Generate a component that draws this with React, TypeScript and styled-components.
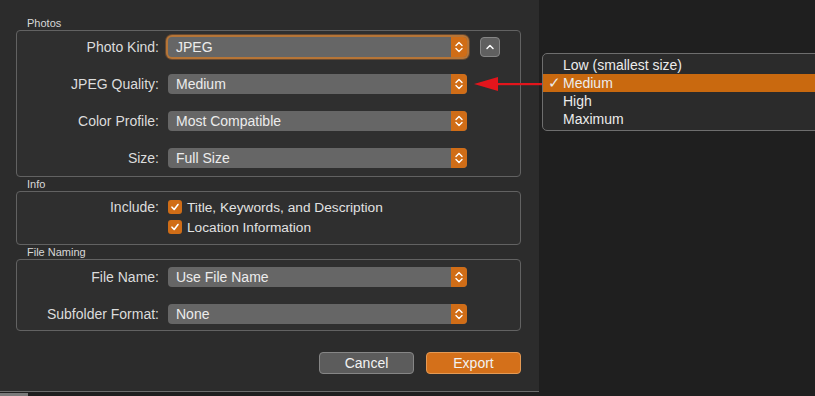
import styled, { createGlobalStyle } from "styled-components";

const GlobalStyle = createGlobalStyle`
  html, body {
    margin: 0;
    padding: 0;
    background: #1f1f1f;
    font-family: "Liberation Sans", Arial, sans-serif;
    -webkit-font-smoothing: antialiased;
  }
`;

const ORANGE = "#d06d17";

const Screen = styled.div`
  position: relative;
  width: 815px;
  height: 396px;
  display: flex;
  overflow: hidden;
  background: #1f1f1f;
`;

const Dialog = styled.div`
  width: 539px;
  height: 392px;
  box-sizing: border-box;
  background: #2c2c2c;
  border-bottom: 1px solid #6c6c6c;
  padding: 16px 19px 0 16px;
  display: flex;
  flex-direction: column;
`;

const BottomStrip = styled.div`
  position: absolute;
  left: 0;
  bottom: 0;
  width: 28px;
  height: 3px;
  background: #7a7a7a;
`;

const GroupTitle = styled.div`
  font-size: 11px;
  line-height: 14px;
  height: 14px;
  color: #d8d8d8;
  padding-left: 11px;
`;

const GroupBox = styled.div<{ $pt: number; $pb: number; $gap: number }>`
  box-sizing: border-box;
  width: 505px;
  border: 1px solid #626262;
  border-radius: 4px;
  background: #2f2f2f;
  padding: ${(p) => p.$pt}px 0 ${(p) => p.$pb}px 0;
  display: flex;
  flex-direction: column;
  gap: ${(p) => p.$gap}px;
`;

const Row = styled.div<{ $h: number }>`
  display: flex;
  align-items: center;
  height: ${(p) => p.$h}px;
`;

const Label = styled.div`
  width: 142px;
  margin-right: 9px;
  text-align: right;
  font-size: 14px;
  color: #dcdcdc;
`;

const Popup = styled.div<{ $focus?: boolean }>`
  position: relative;
  box-sizing: border-box;
  width: 299px;
  height: 20px;
  border-radius: 4px;
  background: #666666;
  display: flex;
  align-items: center;
  padding-left: 8px;
  font-size: 14px;
  color: #ececec;
  box-shadow: ${(p) =>
    p.$focus ? "0 0 0 2px rgba(196, 124, 56, 0.85), 0 0 0 3px rgba(160, 100, 50, 0.5)" : "none"};
`;

const Stepper = styled.div`
  position: absolute;
  right: 0;
  top: 0;
  width: 16px;
  height: 20px;
  background: ${ORANGE};
  border-radius: 0 4px 4px 0;
  display: flex;
  align-items: center;
  justify-content: center;
`;

const SmallButton = styled.div`
  box-sizing: border-box;
  width: 20px;
  height: 20px;
  margin-left: 13px;
  border: 1px solid #868686;
  border-radius: 4px;
  background: #606060;
  display: flex;
  align-items: center;
  justify-content: center;
`;

const CheckRow = styled.div`
  display: flex;
  align-items: center;
  gap: 5px;
  font-size: 13.7px;
  color: #e2e2e2;
`;

const CheckOffset = styled(CheckRow)`
  margin-left: 151px;
`;

const Checkbox = styled.div`
  box-sizing: border-box;
  width: 14px;
  height: 14px;
  border-radius: 3px;
  background: ${ORANGE};
  display: flex;
  align-items: center;
  justify-content: center;
`;

const ButtonBar = styled.div`
  width: 505px;
  margin-top: 21px;
  display: flex;
  justify-content: flex-end;
  gap: 12px;
`;

const Button = styled.div<{ $primary?: boolean }>`
  box-sizing: border-box;
  width: 95px;
  height: 22px;
  border-radius: 4px;
  border: 1px solid ${(p) => (p.$primary ? "#e49a55" : "#868686")};
  background: ${(p) => (p.$primary ? "#d4701a" : "#5c5c5c")};
  color: #f2f2f2;
  font-size: 14px;
  display: flex;
  align-items: center;
  justify-content: center;
`;

const Menu = styled.div`
  position: absolute;
  left: 542px;
  top: 53px;
  width: 290px;
  box-sizing: border-box;
  border: 1px solid #6e6e6e;
  border-radius: 5px;
  background: #2b2b2b;
  padding: 2px 0 2px 0;
  display: flex;
  flex-direction: column;
`;

const MenuItem = styled.div<{ $active?: boolean }>`
  position: relative;
  height: 18px;
  line-height: 18px;
  padding-left: 20px;
  font-size: 14px;
  color: #ececec;
  background: ${(p) => (p.$active ? "#c9690f" : "transparent")};
`;

const Check = styled.span`
  position: absolute;
  left: 5px;
  top: 0;
  font-size: 15px;
`;

const Arrow = styled.svg`
  position: absolute;
  left: 472px;
  top: 76px;
`;

const Chevrons = () => (
  <svg width="10" height="16" viewBox="0 0 10 16">
    <path d="M2 6.5 L5 3.5 L8 6.5" fill="none" stroke="#fff" strokeWidth="1.4" strokeLinecap="round" strokeLinejoin="round" />
    <path d="M2 9.5 L5 12.5 L8 9.5" fill="none" stroke="#fff" strokeWidth="1.4" strokeLinecap="round" strokeLinejoin="round" />
  </svg>
);

const Tick = () => (
  <svg width="10" height="10" viewBox="0 0 10 10">
    <path d="M2 5.2 L4.2 7.5 L8 2.5" fill="none" stroke="#fff" strokeWidth="1.6" strokeLinecap="round" strokeLinejoin="round" />
  </svg>
);

type FieldProps = { label: string; value: string; focus?: boolean; extra?: boolean };

const Field = ({ label, value, focus, extra }: FieldProps) => (
  <Row $h={23}>
    <Label>{label}</Label>
    <Popup $focus={focus}>
      {value}
      <Stepper>
        <Chevrons />
      </Stepper>
    </Popup>
    {extra && (
      <SmallButton>
        <svg width="10" height="8" viewBox="0 0 10 8">
          <path d="M2 5.5 L5 2.5 L8 5.5" fill="none" stroke="#fff" strokeWidth="1.5" strokeLinecap="round" strokeLinejoin="round" />
        </svg>
      </SmallButton>
    )}
  </Row>
);

export default function App() {
  return (
    <Screen>
      <GlobalStyle />
      <Dialog>
        <GroupTitle>Photos</GroupTitle>
        <GroupBox $pt={4} $pb={7} $gap={14}>
          <Field label="Photo Kind:" value="JPEG" focus extra />
          <Field label="JPEG Quality:" value="Medium" />
          <Field label="Color Profile:" value="Most Compatible" />
          <Field label="Size:" value="Full Size" />
        </GroupBox>

        <GroupTitle>Info</GroupTitle>
        <GroupBox $pt={5} $pb={7} $gap={0}>
          <Row $h={20}>
            <Label>Include:</Label>
            <CheckRow>
              <Checkbox>
                <Tick />
              </Checkbox>
              Title, Keywords, and Description
            </CheckRow>
          </Row>
          <Row $h={20}>
            <CheckOffset>
              <Checkbox>
                <Tick />
              </Checkbox>
              Location Information
            </CheckOffset>
          </Row>
        </GroupBox>

        <GroupTitle>File Naming</GroupTitle>
        <GroupBox $pt={5} $pb={5} $gap={14}>
          <Field label="File Name:" value="Use File Name" />
          <Field label="Subfolder Format:" value="None" />
        </GroupBox>

        <ButtonBar>
          <Button>Cancel</Button>
          <Button $primary>Export</Button>
        </ButtonBar>
      </Dialog>
      <BottomStrip />

      <Arrow width="72" height="16" viewBox="0 0 72 16">
        <path d="M2 8 L26 1 L26 15 Z" fill="#e3151c" />
        <rect x="24" y="7" width="48" height="2.2" fill="#e3151c" />
      </Arrow>

      <Menu>
        <MenuItem>Low (smallest size)</MenuItem>
        <MenuItem $active>
          <Check>✓</Check>
          Medium
        </MenuItem>
        <MenuItem>High</MenuItem>
        <MenuItem>Maximum</MenuItem>
      </Menu>
    </Screen>
  );
}
